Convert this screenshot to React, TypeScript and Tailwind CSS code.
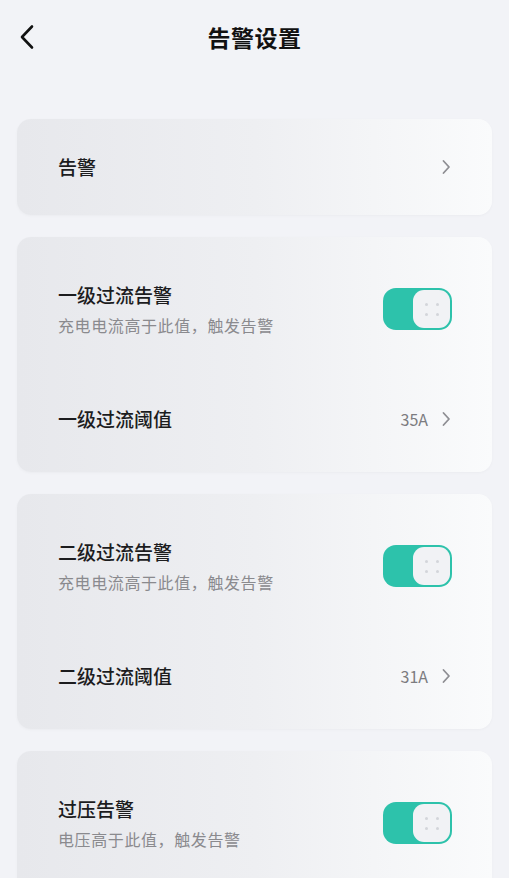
import React from "react";

const font = { fontFamily: '"Noto Sans CJK SC", "Noto Sans", sans-serif' };

function ChevronRight() {
  return (
    <svg width="12" height="16" viewBox="0 0 12 16" fill="none">
      <path d="M3.5 2 L9 8 L3.5 14" stroke="#8e8e93" strokeWidth="1.8" strokeLinecap="round" strokeLinejoin="round" />
    </svg>
  );
}

function Dot() {
  return <span className="block w-[3px] h-[3px] rounded-full bg-[#d3d5da]" />;
}

function Toggle() {
  return (
    <div className="w-[69px] h-[42px] rounded-[13px] bg-[#2dc2ab] flex items-center justify-end p-[2px] shrink-0">
      <div className="w-[37px] h-[38px] rounded-[11px] bg-[#f1f2f5] flex flex-col items-center justify-center gap-[7px]">
        <div className="flex gap-[8px]">
          <Dot />
          <Dot />
        </div>
        <div className="flex gap-[8px]">
          <Dot />
          <Dot />
        </div>
      </div>
    </div>
  );
}

const cardCls =
  "mx-[17px] rounded-[14px] bg-gradient-to-r from-[#e7e8ec] via-[#eeeff2] to-[#fafbfc] shadow-[0_1px_3px_rgba(0,0,0,0.03)]";

function AlarmCard({ title, desc, label, value }: { title: string; desc: string; label?: string; value?: string }) {
  return (
    <div className={`${cardCls} pt-[44px] pb-[40px] pl-[41px] pr-[40px]`}>
      <div className="flex items-center justify-between">
        <div className="flex flex-col">
          <span className="text-[19px] leading-[28px] font-medium text-[#1c1c1e]">{title}</span>
          <span className="text-[16px] leading-[24px] mt-[4px] text-[#8a8a8e] tracking-[0.6px]">{desc}</span>
        </div>
        <Toggle />
      </div>
      {label && (
        <div className="flex items-center justify-between mt-[69px] h-[26px]">
          <span className="text-[19px] leading-[26px] font-medium text-[#1c1c1e]">{label}</span>
          <div className="flex items-center gap-[12px]">
            <span className="text-[16px] text-[#7c7c80]">{value}</span>
            <ChevronRight />
          </div>
        </div>
      )}
    </div>
  );
}

export default function App() {
  return (
    <div className="w-[509px] h-[878px] overflow-hidden bg-[#f2f3f7]" style={font}>
      <div className="relative h-[75px] flex items-center justify-center">
        <svg className="absolute left-[18px] top-[24px]" width="18" height="26" viewBox="0 0 18 26" fill="none">
          <path d="M14 2.5 L4 13 L14 23.5" stroke="#111" strokeWidth="2.6" strokeLinecap="round" strokeLinejoin="round" />
        </svg>
        <span className="text-[23px] font-bold text-[#111] tracking-[0.5px]">告警设置</span>
      </div>
      <div className="flex flex-col gap-[22px] pt-[44px]">
        <div className={`${cardCls} h-[96px] flex items-center justify-between pl-[41px] pr-[40px]`}>
          <span className="text-[19px] font-medium text-[#1c1c1e]">告警</span>
          <ChevronRight />
        </div>
        <AlarmCard title="一级过流告警" desc="充电电流高于此值，触发告警" label="一级过流阈值" value="35A" />
        <AlarmCard title="二级过流告警" desc="充电电流高于此值，触发告警" label="二级过流阈值" value="31A" />
        <AlarmCard title="过压告警" desc="电压高于此值，触发告警" />
      </div>
    </div>
  );
}
